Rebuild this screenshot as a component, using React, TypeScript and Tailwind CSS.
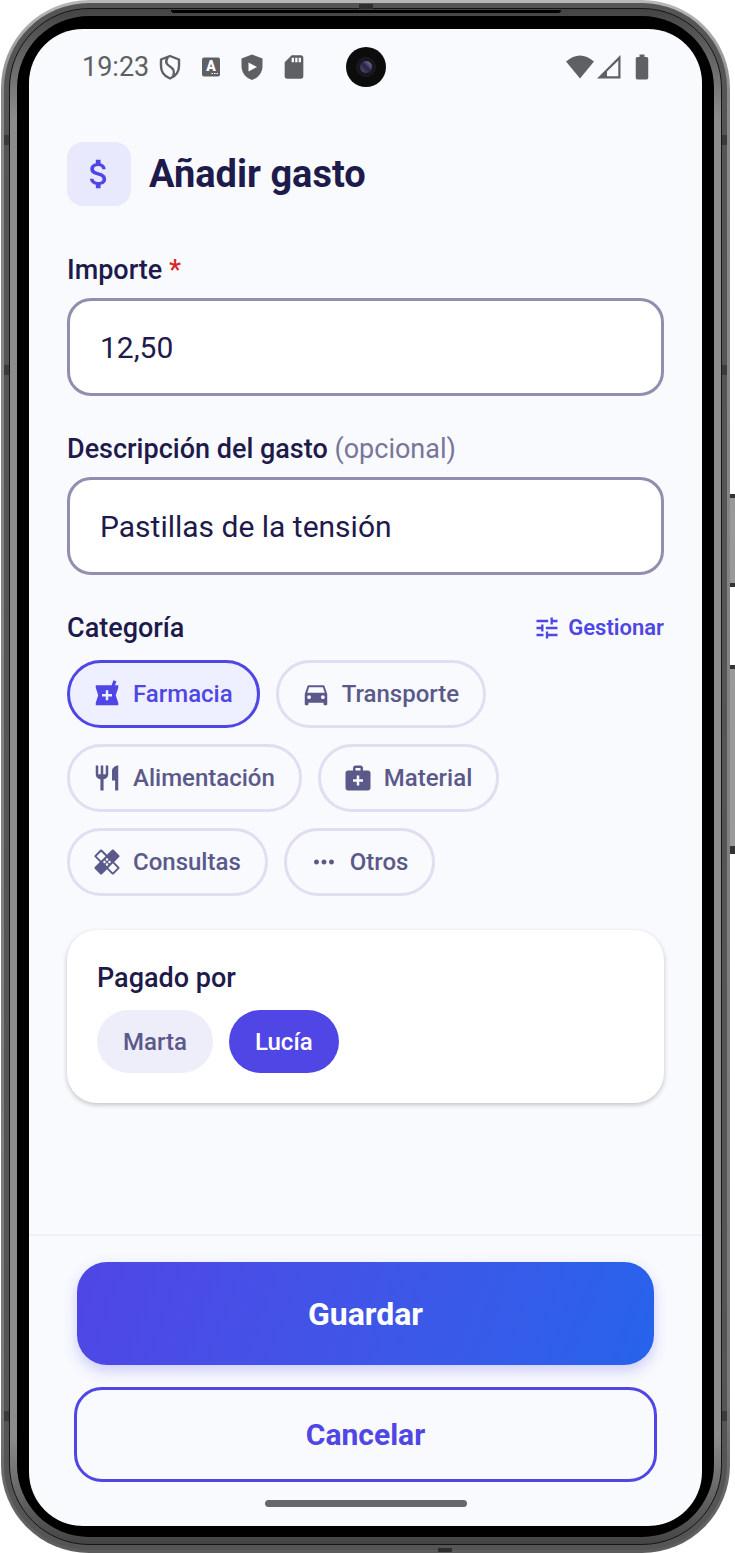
import React, { useState } from "react";
import {
  MdAttachMoney,
  MdBatteryFull,
  MdDirectionsCar,
  MdHealing,
  MdLocalPharmacy,
  MdMedicalServices,
  MdMoreHoriz,
  MdRestaurant,
  MdSdCard,
  MdTune,
} from "react-icons/md";
import clsx from "clsx";

const categories = [
  { name: "Farmacia", icon: MdLocalPharmacy },
  { name: "Transporte", icon: MdDirectionsCar },
  { name: "Alimentación", icon: MdRestaurant },
  { name: "Material", icon: MdMedicalServices },
  { name: "Consultas", icon: MdHealing },
  { name: "Otros", icon: MdMoreHoriz },
];

const payers = ["Marta", "Lucía"];

const StatusBar: React.FC = () => (
  <div className="relative flex h-[76px] shrink-0 items-center justify-between pl-[53px] pr-[45px] text-[#5f6063]">
    <div className="flex items-center">
      <span className="text-[27px] leading-8">19:23</span>
      <svg className="ml-[9px] h-7 w-6" viewBox="0 0 24 28" fill="none" stroke="currentColor" strokeWidth="2.4">
        <path d="M12 3 L21 6.5 V13 C21 19 17 23.5 12 25.5 C7 23.5 3 19 3 13 V6.5 Z" strokeLinejoin="round" />
        <path d="M10 4 C6.500 9 8.500 11.500 12 13.500 C16 16 17 18.500 15 23" />
      </svg>
      <svg className="ml-5 h-5 w-[18px]" viewBox="0 0 18 20">
        <rect x="0" y="0.500" width="18" height="19" rx="2" fill="currentColor" />
        <text x="9" y="13.500" textAnchor="middle" fontFamily="Roboto, sans-serif" fontSize="14" fontWeight="900" fill="#fff">A</text>
        <path d="M9.500 16.500h1.500M12 16.500h1.500M14.500 16.500h1.500" stroke="#fff" strokeWidth="1.200" />
      </svg>
      <svg className="ml-5 h-7 w-6" viewBox="0 0 24 28">
        <path d="M12 1.500 L22.500 5.500 V13 C22.500 20 18 25 12 27 C6 25 1.500 20 1.500 13 V5.500 Z" fill="currentColor" />
        <path d="M8.500 9.500 L17 14 L8.500 18.500 Z" fill="#fff" />
      </svg>
      <MdSdCard className="ml-4 h-7 w-7" />
    </div>

    {/* Front camera */}
    <div className="absolute left-1/2 top-[18px] flex size-10 -translate-x-1/2 items-center justify-center rounded-full bg-[#0c0c0d]">
      <div className="flex size-5 items-center justify-center rounded-full border border-[#1c1c22] bg-[#17171d]">
        <div className="size-3 rounded-full bg-linear-to-bl from-[#a78bc0] via-[#2c2147] to-[#4d6271]" />
      </div>
    </div>

    <div className="flex items-center">
      <svg className="h-6 w-7" viewBox="0 0 28 24">
        <path d="M0 6.500 Q14 -5.500 28 6.500 L14 23.500 Z" fill="currentColor" />
      </svg>
      <svg className="ml-[3px] h-6 w-6" viewBox="0 0 24 24">
        <path fillRule="evenodd" d="M0 23.500 L23.500 0 V23.500 Z M10 21.300 H21.300 V5.500 L10 16.500 Z" fill="currentColor" />
      </svg>
      <MdBatteryFull className="ml-[6px] h-[30px] w-[30px]" />
    </div>
  </div>
);

// Antenna bands and earpiece slit, laid over the metal rim
const RimMarks: React.FC = () => (
  <>
    {["top-[135px]", "top-[365px]", "bottom-[132px]"].map((pos) => (
      <React.Fragment key={pos}>
        <div className={clsx("absolute left-[3px] h-[10px] w-[5px] bg-[#3a3a3a]", pos)} />
        <div className={clsx("absolute right-[3px] h-[10px] w-[5px] bg-[#3a3a3a]", pos)} />
      </React.Fragment>
    ))}
    <div className="absolute left-1/2 top-1 h-[5px] w-[14px] -translate-x-1/2 bg-[#2e2e2e]" />
    <div className="absolute left-1/2 top-[10px] h-[3px] w-[390px] -translate-x-1/2 rounded-b bg-black" />
    <div className="absolute bottom-px left-[60%] h-1 w-[14px] bg-[#2e2e2e]" />
  </>
);

const App: React.FC = () => {
  const [amount, setAmount] = useState("12,50");
  const [description, setDescription] = useState("Pastillas de la tensión");
  const [category, setCategory] = useState("Farmacia");
  const [payer, setPayer] = useState("Lucía");

  return (
    <div className="flex min-h-screen bg-white pl-px font-[Roboto,sans-serif] text-[#1e1a4b]">
      {/* Phone body: metal rim, inner rim, black bezel */}
      <div className="relative flex flex-1 rounded-[88px] bg-[linear-gradient(#b8b8b8,#8a8a8a_6%,#7a7a7a_90%,#5c5c5c)] p-[3px]">
        <RimMarks />
        <div className="flex flex-1 rounded-[85px] bg-[#555555] p-[5px]">
          <div className="flex flex-1 rounded-[80px] border border-[#161616] bg-[linear-gradient(#444444,#8c8c8c_7%,#8c8c8c_93%,#444444)] p-[7px]">
            <div className="flex flex-1 rounded-[72px] bg-black px-3 pb-[11px] pt-[13px]">
              <div className="flex flex-1 flex-col rounded-[54px] bg-[#f8fafe]">
                <StatusBar />

                <main className="flex flex-1 flex-col px-[38px] pt-[37px]">
                  <header className="flex items-center gap-[18px]">
                    <div className="flex size-16 items-center justify-center rounded-2xl bg-[#e8e9fc]">
                      <MdAttachMoney className="size-[38px] text-[#4f46e5]" />
                    </div>
                    <h1 className="text-[38px] font-bold leading-[48px]">Añadir gasto</h1>
                  </header>

                  <label htmlFor="amount" className="mt-12 text-[27px] font-medium leading-8">
                    Importe <span className="text-[#dc2626]">*</span>
                  </label>
                  <input
                    id="amount"
                    inputMode="decimal"
                    value={amount}
                    onChange={(e) => setAmount(e.target.value)}
                    className="mt-3 h-[98px] w-full rounded-3xl border-3 border-[#918eae] bg-white px-[30px] text-[30px] outline-none"
                  />

                  <label htmlFor="description" className="mt-[37px] text-[27px] font-medium leading-8">
                    Descripción del gasto <span className="font-normal text-[#77759a]">(opcional)</span>
                  </label>
                  <input
                    id="description"
                    value={description}
                    onChange={(e) => setDescription(e.target.value)}
                    className="mt-3 h-[98px] w-full rounded-3xl border-3 border-[#918eae] bg-white px-[30px] text-[30px] outline-none"
                  />

                  <div className="mt-[37px] flex items-center justify-between">
                    <h2 className="text-[27px] font-medium leading-8">Categoría</h2>
                    <button type="button" className="flex items-center gap-[7px] text-[22px] font-semibold leading-8 text-[#4f46e5]">
                      <MdTune className="size-7" />
                      Gestionar
                    </button>
                  </div>
                  <div className="mt-4 flex flex-wrap gap-4">
                    {categories.map(({ name, icon: Icon }) => (
                      <button
                        key={name}
                        type="button"
                        aria-pressed={category === name}
                        onClick={() => setCategory(name)}
                        className={clsx(
                          "flex h-[68px] items-center gap-[11px] rounded-full border-3 pl-[22px] pr-6 text-[24px] font-medium",
                          category === name
                            ? "border-[#4f46e5] bg-[#eef0ff] text-[#4f46e5]"
                            : "border-[#e0def0] text-[#5b598a]"
                        )}
                      >
                        <Icon className="size-[30px]" />
                        {name}
                      </button>
                    ))}
                  </div>

                  <section className="mt-[34px] rounded-[30px] bg-white px-[30px] pb-[30px] pt-8 shadow-[0_2px_5px_rgba(0,0,0,0.22)]">
                    <h2 className="text-[27px] font-medium leading-8">Pagado por</h2>
                    <div className="mt-4 flex gap-4">
                      {payers.map((name) => (
                        <button
                          key={name}
                          type="button"
                          aria-pressed={payer === name}
                          onClick={() => setPayer(name)}
                          className={clsx(
                            "h-[63px] rounded-full px-[26px] text-[24px] font-medium",
                            payer === name ? "bg-[#4f46e5] text-white" : "bg-[#eeedfa] text-[#5b598a]"
                          )}
                        >
                          {name}
                        </button>
                      ))}
                    </div>
                  </section>
                </main>

                <footer className="flex flex-col items-center border-t-2 border-[#f0f1f6] px-[45px] pb-[19px] pt-[26px]">
                  <div className="w-full px-[3px]">
                    <button
                      type="button"
                      className="h-[103px] w-full rounded-[30px] bg-linear-110 from-[#4f46e5] to-[#2563eb] text-[32px] font-bold text-white shadow-[0_6px_14px_rgba(79,70,229,0.25)]"
                    >
                      Guardar
                    </button>
                  </div>
                  <button
                    type="button"
                    className="mt-[22px] h-[95px] w-full rounded-[28px] border-3 border-[#4f46e5] text-[30px] font-bold text-[#4f46e5]"
                  >
                    Cancelar
                  </button>
                  <div className="mt-[18px] h-[7px] w-[202px] rounded-full bg-[#66676a]" />
                </footer>
              </div>
            </div>
          </div>
        </div>
      </div>

      {/* Power and volume keys */}
      <div className="w-[5px] shrink-0 pt-[494px]">
        <div className="h-[93px] border-y-4 border-[#333333] bg-[#9a9a9a]" />
        <div className="mt-[78px] h-[189px] border-b-8 border-t-4 border-[#333333] bg-[#9a9a9a]" />
      </div>
    </div>
  );
};

export default App;
